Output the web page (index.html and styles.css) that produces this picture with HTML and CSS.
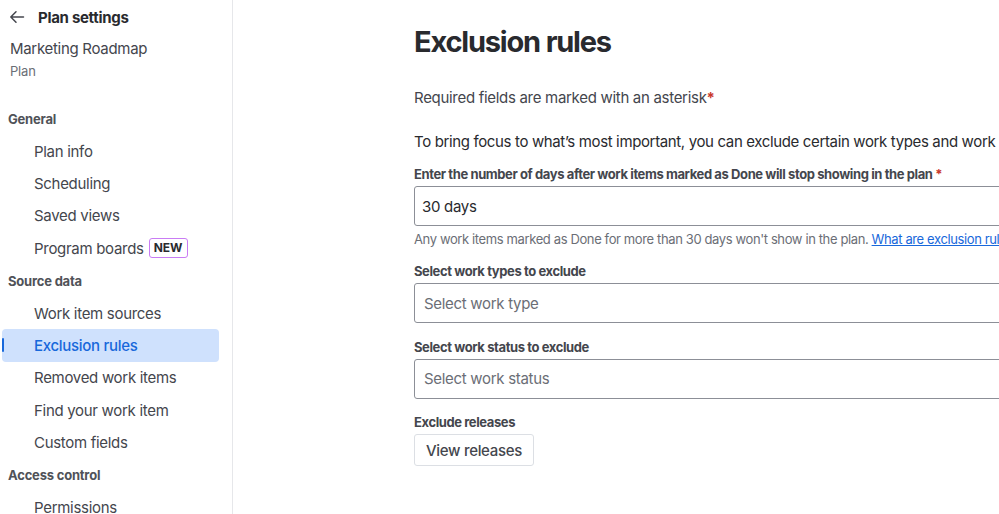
FILE: index.html
```html
<!DOCTYPE html>
<html lang="en">
<head>
<meta charset="utf-8">
<title>Exclusion rules</title>
<link rel="stylesheet" href="styles.css">
</head>
<body>
<div class="app">
  <aside class="sidebar">
    <div class="side-head">
      <svg class="back" width="16" height="16" viewBox="0 0 16 16" fill="none" stroke="#44464d" stroke-width="1.5" stroke-linecap="round" stroke-linejoin="round"><path d="M14.5 8H1.8M7 2.8L1.8 8 7 13.2"/></svg>
      <span class="side-title">Plan settings</span>
    </div>
    <div class="plan-name">Marketing Roadmap</div>
    <div class="plan-type">Plan</div>
    <nav class="nav">
      <div class="nav-head first">General</div>
      <div class="nav-item">Plan info</div>
      <div class="nav-item">Scheduling</div>
      <div class="nav-item">Saved views</div>
      <div class="nav-item">Program boards <span class="badge">NEW</span></div>
      <div class="nav-head">Source data</div>
      <div class="nav-item">Work item sources</div>
      <div class="nav-item active">Exclusion rules</div>
      <div class="nav-item">Removed work items</div>
      <div class="nav-item">Find your work item</div>
      <div class="nav-item">Custom fields</div>
      <div class="nav-head">Access control</div>
      <div class="nav-item">Permissions</div>
    </nav>
  </aside>
  <main class="main">
    <h1 class="title">Exclusion rules</h1>
    <p class="required">Required fields are marked with an asterisk<span class="ast">*</span></p>
    <p class="intro">To bring focus to what’s most important, you can exclude certain work types and work statuses from your plan.</p>
    <div class="field">
      <label class="label">Enter the number of days after work items marked as Done will stop showing in the plan <span class="ast">*</span></label>
      <div class="input">30 days</div>
      <div class="helper">Any work items marked as Done for more than 30 days won't show in the plan. <a class="link" href="#">What are exclusion rules?</a></div>
    </div>
    <div class="field after-helper">
      <label class="label">Select work types to exclude</label>
      <div class="input select">Select work type</div>
    </div>
    <div class="field">
      <label class="label">Select work status to exclude</label>
      <div class="input select">Select work status</div>
    </div>
    <div class="field">
      <label class="label">Exclude releases</label>
      <button class="btn">View releases</button>
    </div>
  </main>
</div>
</body>
</html>
```
FILE: styles.css
```css
* { box-sizing: border-box; }
html, body { margin: 0; padding: 0; }
body {
  width: 999px;
  height: 514px;
  overflow: hidden;
  background: #fff;
  font-family: Inter, "Noto Sans", "Liberation Sans", sans-serif;
  color: #292a2e;
  letter-spacing: -0.3px;
}
.app { display: flex; height: 514px; }

.sidebar {
  width: 233px;
  flex: none;
  border-right: 1px solid #e6e7ea;
  padding-top: 6px;
}
.side-head {
  display: flex;
  align-items: center;
  height: 22px;
  padding-left: 9px;
  gap: 13px;
}
.back { flex: none; }
.side-title { font-size: 15px; font-weight: 700; color: #292a2e; }
.plan-name { margin-top: 11.5px; padding-left: 10px; font-size: 15px; color: #44464d; line-height: 18px; }
.plan-type { margin-top: 4px; padding-left: 10px; font-size: 13px; color: #6b6e76; line-height: 18px; letter-spacing: -0.2px; }

.nav { display: flex; flex-direction: column; margin-top: 23px; }
.nav-head {
  height: 32.4px;
  display: flex;
  align-items: center;
  padding-left: 8px;
  font-size: 13px;
  font-weight: 700;
  color: #505258;
  letter-spacing: -0.2px;
}
.nav-item {
  position: relative;
  height: 32.4px;
  margin-left: 2px;
  width: 217px;
  display: flex;
  align-items: center;
  padding-left: 32px;
  font-size: 15px;
  color: #44464d;
  border-radius: 4px;
}
.nav-item.active { background: #cfe1fd; color: #1868db; font-weight: 500; }
.nav-item.active::before {
  content: "";
  position: absolute;
  left: 0;
  top: 9px;
  width: 2px;
  height: 14px;
  background: #1868db;
  border-radius: 1px;
}
.badge {
  margin-left: 5px;
  font-size: 12px;
  font-weight: 700;
  color: #292a2e;
  border: 1px solid #c97cf4;
  border-radius: 3px;
  padding: 1px 4px;
  line-height: 16px;
  letter-spacing: 0;
}

.main { flex: none; width: 780px; padding-left: 181px; padding-top: 25px; }
.title { margin: 0; font-size: 29px; font-weight: 700; line-height: 34px; letter-spacing: -1.2px; color: #292a2e; }
.required { margin: 29px 0 0; font-size: 15px; line-height: 20px; color: #44464d; }
.ast { color: #c9372c; font-weight: 700; }
.intro { margin: 24px 0 0; font-size: 15px; line-height: 20px; white-space: nowrap; color: #292a2e; letter-spacing: -0.36px; }
.field { display: flex; flex-direction: column; }
.label { font-size: 13px; font-weight: 700; line-height: 16px; color: #44464d; margin-top: 14px; margin-bottom: 4px; letter-spacing: -0.4px; }
.field + .field .label { margin-top: 15.5px; }
.field.after-helper .label { margin-top: 15px; }
.input {
  height: 40px;
  border: 1px solid #8c8f97;
  border-radius: 3px;
  display: flex;
  align-items: center;
  padding-left: 7px;
  font-size: 15px;
  color: #292a2e;
}
.input.select { padding-left: 9px; color: #6b6e76; }
.helper { margin-top: 4px; font-size: 13px; line-height: 18px; color: #6b6e76; white-space: nowrap; letter-spacing: -0.38px; }
.link { color: #1868db; text-decoration: underline; }
.btn {
  align-self: flex-start;
  height: 32px;
  padding: 0 11px;
  border: 1px solid #dcdfe4;
  border-radius: 3px;
  background: #fff;
  font-family: inherit;
  font-size: 15px;
  font-weight: 500;
  color: #44464d;
  letter-spacing: -0.3px;
}
```
